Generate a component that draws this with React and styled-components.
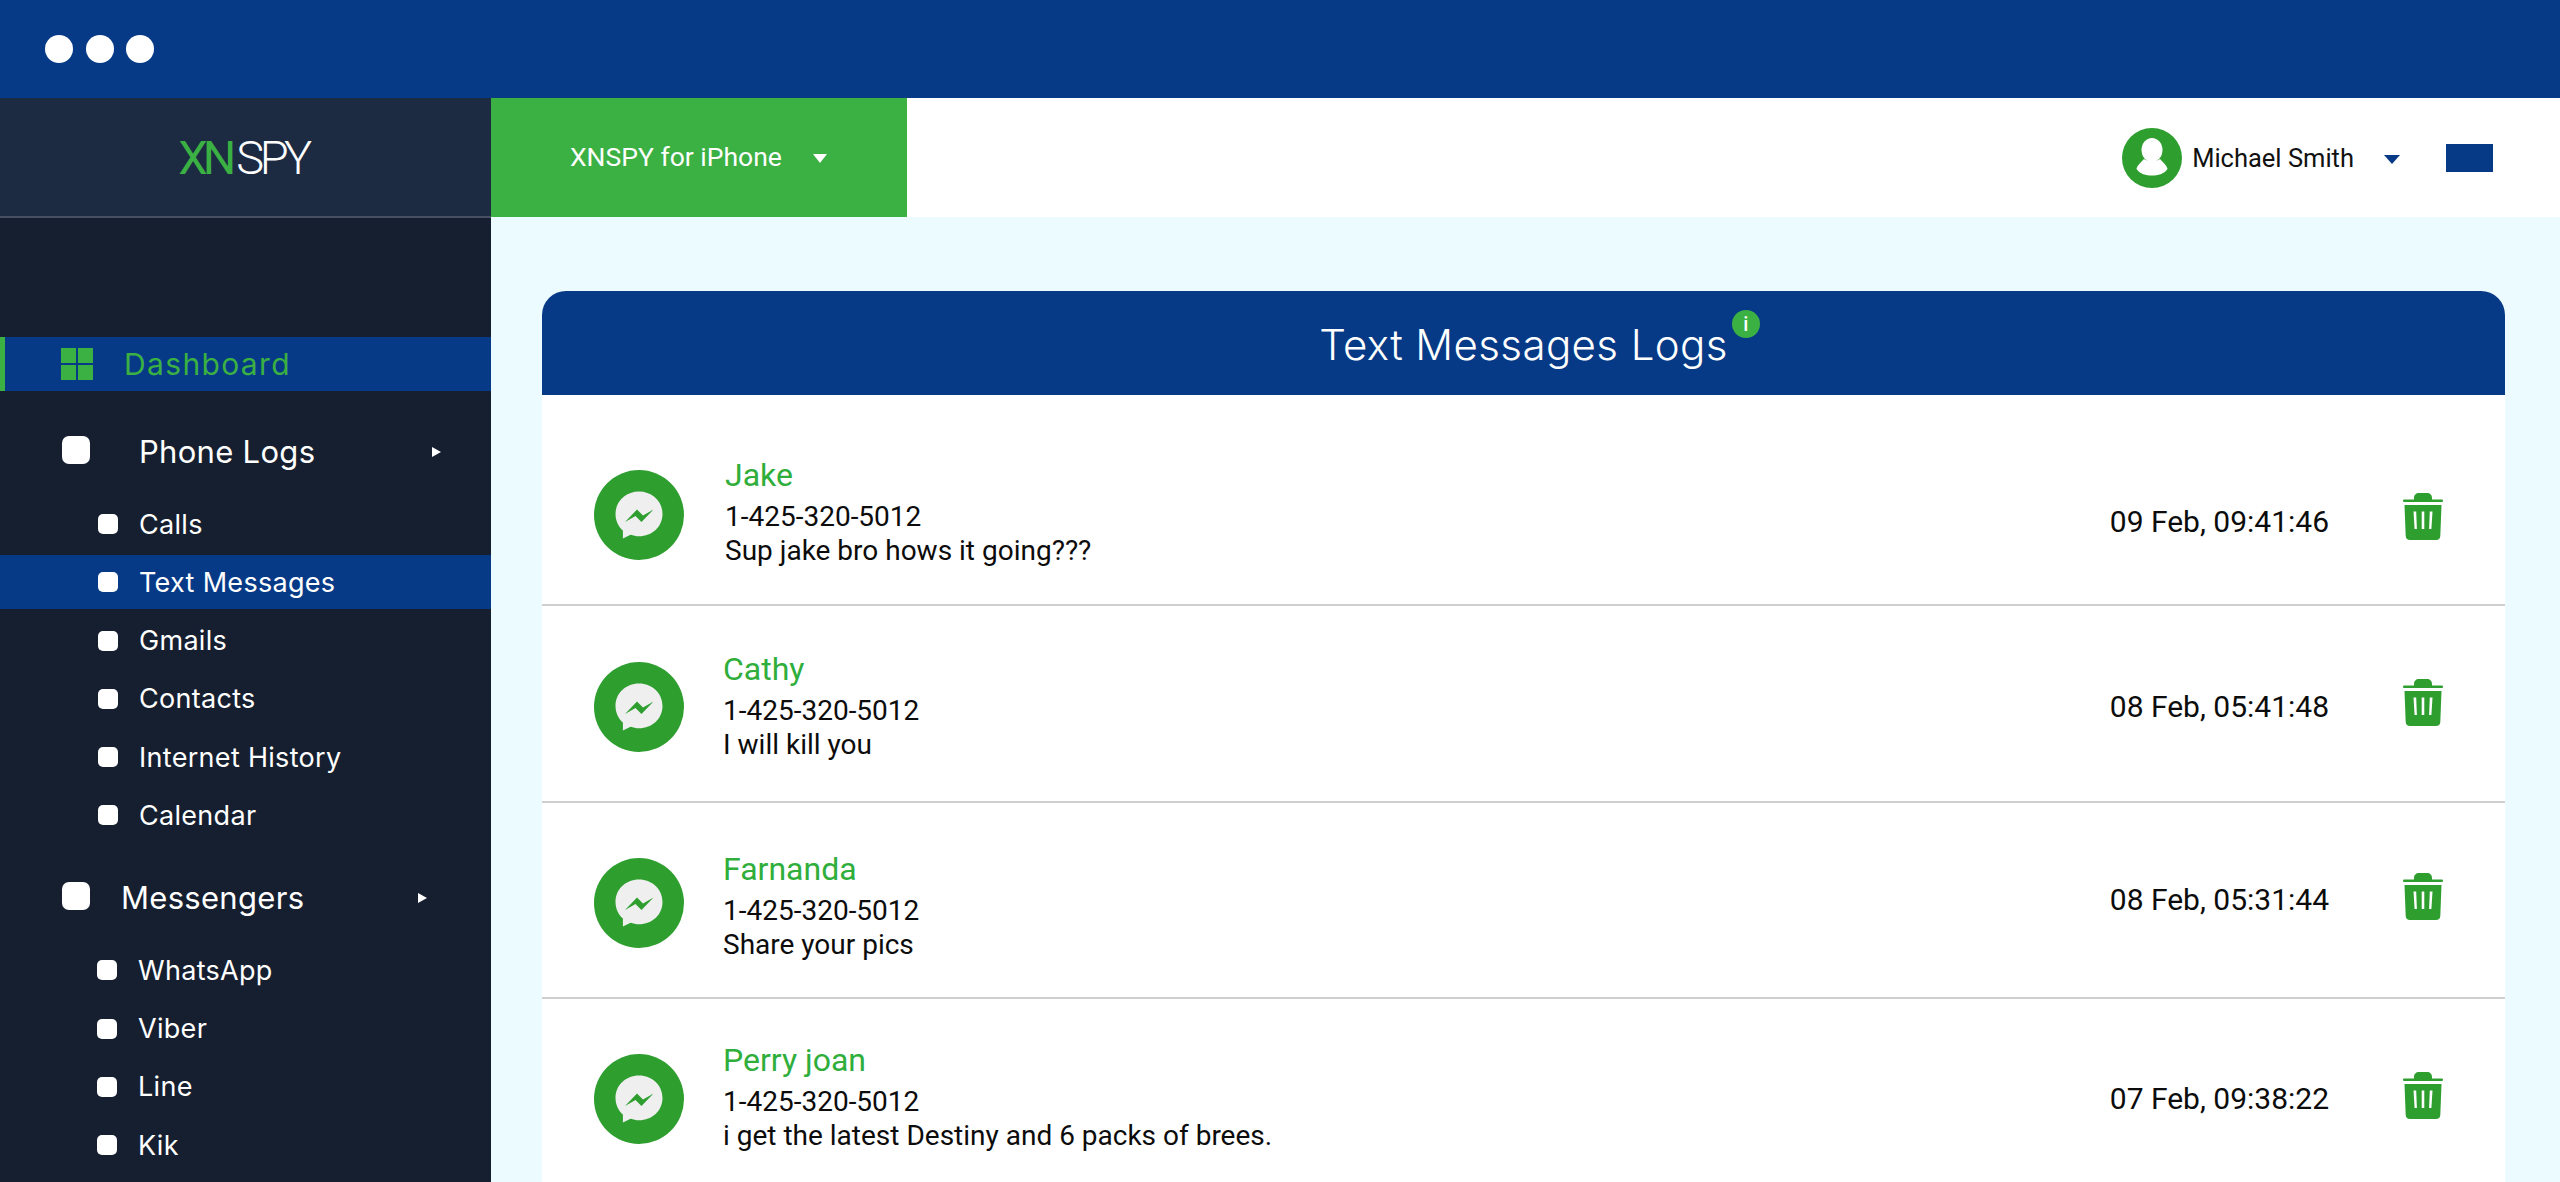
import styled, { createGlobalStyle } from 'styled-components'

const NAVY = '#063a87'
const GREEN = '#3bb043'
const DARK_GREEN = '#2e9e2f'
const SANS = "Inter, 'Noto Sans', sans-serif"
const ROBOTO = "Roboto, 'Liberation Sans', sans-serif"

const Global = createGlobalStyle`
	html, body {
		margin: 0;
		height: 100%;
		overflow: hidden;
		background: #ecfbff;
	}
	* {
		box-sizing: border-box;
	}
`

const Page = styled.div`
	height: 1182px;
	overflow: hidden;
	display: flex;
	flex-direction: column;
`

const TopBar = styled.div`
	height: 98px;
	flex: none;
	background: ${NAVY};
	display: flex;
	align-items: center;
	gap: 12.5px;
	padding: 0 0 0 45px;
`

const Dot = styled.span`
	width: 28px;
	height: 28px;
	border-radius: 50%;
	background: #fff;
`

const Body = styled.div`
	flex: 1;
	display: flex;
	min-height: 0;
`

const Sidebar = styled.aside`
	width: 491px;
	flex: none;
	background: #161f30;
	color: #fff;
	font-family: ${SANS};
`

const LogoBox = styled.div`
	height: 120px;
	background: #1d2b42;
	border-bottom: 2px solid #465062;
	display: flex;
	align-items: center;
	justify-content: center;
`

const Logo = styled.div`
	font-family: ${ROBOTO};
	font-weight: 300;
	font-size: 47px;
	line-height: 1;
	letter-spacing: -4.5px;
	color: #fff;
	padding-right: 5px;
	span {
		color: ${GREEN};
		font-weight: 400;
		letter-spacing: -5px;
		margin-right: 5px;
	}
`

const Nav = styled.nav`
	padding-top: 119px;
`

const DashboardItem = styled.div`
	height: 54px;
	background: ${NAVY};
	border-left: 5px solid ${GREEN};
	display: flex;
	align-items: center;
	padding-left: 56px;
	gap: 31px;
	color: ${GREEN};
	font-size: 30px;
	letter-spacing: 1.35px;
`

const GroupRow = styled.div`
	height: 58px;
	margin-top: ${p => p.$top}px;
	display: flex;
	align-items: center;
	padding-left: 62px;
	font-size: 31px;
	letter-spacing: 0.3px;
	line-height: 62px;
`

const BigBox = styled.span`
	width: 28px;
	height: 28px;
	flex: none;
	border-radius: 7px;
	background: #fff;
`

const GroupLabel = styled.span`
	margin: 3px 0 0 ${p => p.$gap}px;
	width: ${p => p.$width}px;
`

const Caret = styled.span`
	width: 0;
	height: 0;
	margin-top: 4px;
	border-left: 9px solid #fff;
	border-top: 5.5px solid transparent;
	border-bottom: 5.5px solid transparent;
`

const SubList = styled.div`
	margin-top: 18px;
	display: flex;
	flex-direction: column;
	gap: 4.25px;
`

const SubItem = styled.div`
	height: 54px;
	display: flex;
	align-items: center;
	gap: 21px;
	padding-left: ${p => p.$left}px;
	font-size: 27px;
	letter-spacing: 0.3px;
	background: ${p => (p.$active ? NAVY : 'transparent')};
`

const SmallBox = styled.span`
	width: 20px;
	height: 20px;
	flex: none;
	border-radius: 5px;
	background: #fff;
`

const Main = styled.main`
	flex: 1;
	min-width: 0;
`

const Header = styled.header`
	height: 119px;
	background: #fff;
	display: flex;
	align-items: center;
	font-family: ${ROBOTO};
`

const ProductTab = styled.div`
	width: 416px;
	height: 100%;
	background: ${GREEN};
	color: #fff;
	font-size: 26.5px;
	display: flex;
	align-items: center;
	padding: 0 0 2px 79px;
	gap: 31px;
`

const DownCaret = styled.span`
	width: 0;
	height: 0;
	margin-top: 4px;
	border-top: 9px solid ${p => p.$color};
	border-left: ${p => p.$half}px solid transparent;
	border-right: ${p => p.$half}px solid transparent;
`

const UserBox = styled.div`
	margin-left: auto;
	display: flex;
	align-items: center;
	padding-right: 67px;
	color: #111;
	font-size: 25.5px;
`

const UserName = styled.span`
	margin: 0 30px 0 10px;
`

const Flag = styled.span`
	width: 47px;
	height: 28px;
	background: ${NAVY};
	margin-left: 46px;
`

const Content = styled.div`
	padding: 74px 55px 0 51px;
`

const Card = styled.section`
	background: #fff;
	border-radius: 24px 24px 0 0;
	font-family: ${ROBOTO};
`

const CardHead = styled.div`
	height: 104px;
	background: ${NAVY};
	border-radius: 24px 24px 0 0;
	display: flex;
	align-items: center;
	justify-content: center;
`

const Title = styled.h1`
	position: relative;
	margin: 4px 0 0;
	font-family: ${SANS};
	font-weight: 300;
	font-size: 42px;
	line-height: 60px;
	letter-spacing: 0.4px;
	color: #fff;
`

const InfoBadge = styled.span`
	position: absolute;
	left: calc(100% + 4px);
	top: -5px;
	width: 28px;
	height: 28px;
	border-radius: 50%;
	background: ${GREEN};
	color: #fff;
	font-family: ${ROBOTO};
	font-size: 20px;
	font-weight: 500;
	line-height: 28px;
	letter-spacing: 0;
	text-align: center;
`

const Row = styled.article`
	height: ${p => p.$height}px;
	display: flex;
	align-items: flex-start;
	padding: 0 62px 0 52px;
	border-bottom: 2px solid #cfcfcf;
	&:last-child {
		border-bottom: 0;
	}
`

const AppIcon = styled.svg`
	width: 90px;
	height: 90px;
	flex: none;
	margin-top: ${p => p.$top}px;
`

const Text = styled.div`
	margin: ${p => p.$top}px 0 0 ${p => p.$left}px;
	font-size: 28px;
	line-height: 34px;
	color: #0c0c0c;
`

const Name = styled.div`
	font-size: 32px;
	line-height: 40px;
	margin-bottom: 5px;
	color: #2fae3b;
`

const Time = styled.div`
	margin: ${p => p.$top}px 0 0 auto;
	font-size: 30px;
	line-height: 34px;
	color: #0c0c0c;
`

const TrashIcon = styled.svg`
	width: 40px;
	height: 47px;
	flex: none;
	margin: ${p => p.$top}px 0 0 74px;
`

const GridIcon = () => (
	<svg width="32" height="32" viewBox="0 0 32 32" fill={GREEN}>
		<rect width="15" height="15" />
		<rect x="17" width="15" height="15" />
		<rect y="17" width="15" height="15" />
		<rect x="17" y="17" width="15" height="15" />
	</svg>
)

const Avatar = () => (
	<svg width="60" height="60" viewBox="0 0 60 60">
		<circle cx="30" cy="30" r="30" fill={DARK_GREEN} />
		<ellipse cx="30" cy="22" rx="10.5" ry="12" fill="#fff" />
		<path d="M22 31C19 34 15 38 14.500 41C18 46 24 47.500 30 47.500C36 47.500 42 46 45.500 41C45 38 41 34 38 31C34 34 26 34 22 31Z" fill="#fff" />
	</svg>
)

const MessengerIcon = ({ top }) => (
	<AppIcon $top={top} viewBox="0 0 90 90">
		<circle cx="45" cy="45" r="45" fill={DARK_GREEN} />
		<path d="M45 21.500C31.800 21.500 21.500 31.200 21.500 44C21.500 50.700 24.300 56.500 28.900 60.500V68.500L36.600 64.800C39.200 65.700 42 66.300 45 66.300C58.200 66.300 68.500 56.700 68.500 44C68.500 31.200 58.200 21.500 45 21.500Z" fill="#efefef" />
		<path d="M31 52L43 39.500L49 45.500L59.500 39.500L47.500 52L41.500 46Z" fill={DARK_GREEN} />
	</AppIcon>
)

const Trash = ({ top }) => (
	<TrashIcon $top={top} viewBox="0 0 40 47" fill={DARK_GREEN}>
		<path d="M11 6.500V5C11 2 13 0 16 0H24C27 0 29 2 29 5V6.500H38.500C39.500 6.500 40 7 40 7.800C40 8.600 39.500 9 38.500 9H1.500C0.500 9 0 8.600 0 7.800C0 7 0.500 6.500 1.500 6.500Z" />
		<path fillRule="evenodd" d="M1.500 12H38.500L37.300 43C37.200 45.500 35.500 47 33 47H7C4.500 47 2.800 45.500 2.700 43ZM10.500 18.500L11.600 36H13.900L13.200 18.500ZM18.700 18.500V36H21.300V18.500ZM26.800 18.500L26.100 36H28.400L29.500 18.500Z" />
	</TrashIcon>
)

const phoneLogs = ['Calls', 'Text Messages', 'Gmails', 'Contacts', 'Internet History', 'Calendar']
const messengers = ['WhatsApp', 'Viber', 'Line', 'Kik']

// tops are measured from each row's upper edge
const logs = [
	{ name: 'Jake', text: 'Sup jake bro hows it going???', time: '09 Feb, 09:41:46', height: 211, icon: 75, textTop: 60, left: 41, timeTop: 110, trash: 98 },
	{ name: 'Cathy', text: 'I will kill you', time: '08 Feb, 05:41:48', height: 197, icon: 56, textTop: 43, left: 39, timeTop: 84, trash: 73 },
	{ name: 'Farnanda', text: 'Share your pics', time: '08 Feb, 05:31:44', height: 196, icon: 55, textTop: 46, left: 39, timeTop: 80, trash: 70 },
	{ name: 'Perry joan', text: 'i get the latest Destiny and 6 packs of brees.', time: '07 Feb, 09:38:22', height: 196, icon: 55, textTop: 41, left: 39, timeTop: 83, trash: 73 }
]

const App = () => (
	<Page>
		<Global />
		<TopBar>
			<Dot />
			<Dot />
			<Dot />
		</TopBar>
		<Body>
			<Sidebar>
				<LogoBox>
					<Logo>
						<span>XN</span>SPY
					</Logo>
				</LogoBox>
				<Nav>
					<DashboardItem>
						<GridIcon />
						Dashboard
					</DashboardItem>
					<GroupRow $top={30}>
						<BigBox />
						<GroupLabel $gap={49} $width={293}>Phone Logs</GroupLabel>
						<Caret />
					</GroupRow>
					<SubList>
						{phoneLogs.map(item => (
							<SubItem key={item} $left={98} $active={item === 'Text Messages'}>
								<SmallBox />
								{item}
							</SubItem>
						))}
					</SubList>
					<GroupRow $top={25}>
						<BigBox />
						<GroupLabel $gap={31} $width={297}>Messengers</GroupLabel>
						<Caret />
					</GroupRow>
					<SubList>
						{messengers.map(item => (
							<SubItem key={item} $left={97}>
								<SmallBox />
								{item}
							</SubItem>
						))}
					</SubList>
				</Nav>
			</Sidebar>
			<Main>
				<Header>
					<ProductTab>
						XNSPY for iPhone
						<DownCaret $color="#fff" $half={7} />
					</ProductTab>
					<UserBox>
						<Avatar />
						<UserName>Michael Smith</UserName>
						<DownCaret $color={NAVY} $half={8} />
						<Flag />
					</UserBox>
				</Header>
				<Content>
					<Card>
						<CardHead>
							<Title>
								Text Messages Logs
								<InfoBadge>i</InfoBadge>
							</Title>
						</CardHead>
						{logs.map(log => (
							<Row key={log.name} $height={log.height}>
								<MessengerIcon top={log.icon} />
								<Text $top={log.textTop} $left={log.left}>
									<Name>{log.name}</Name>
									<div>1-425-320-5012</div>
									<div>{log.text}</div>
								</Text>
								<Time $top={log.timeTop}>{log.time}</Time>
								<Trash top={log.trash} />
							</Row>
						))}
					</Card>
				</Content>
			</Main>
		</Body>
	</Page>
)

export default App
